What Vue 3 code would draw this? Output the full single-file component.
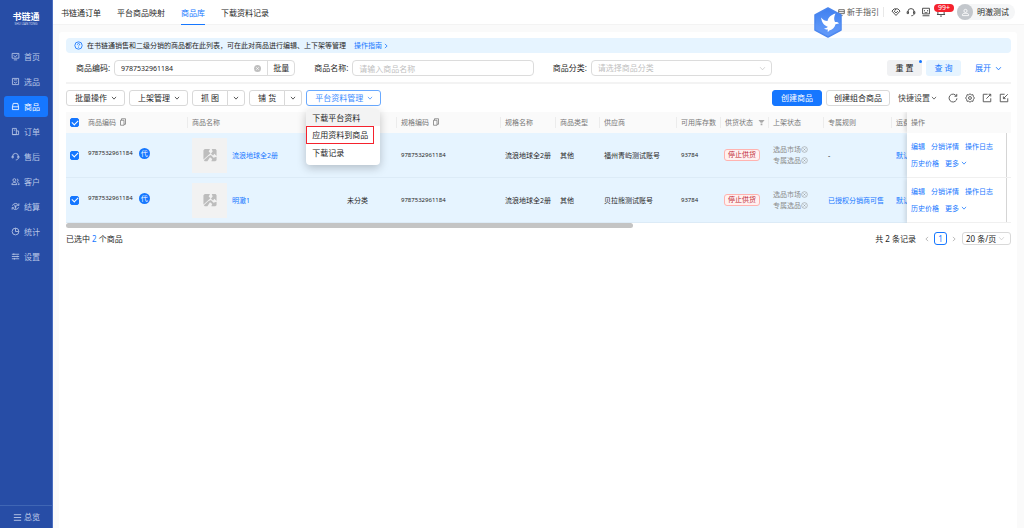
<script setup>
import { ref } from 'vue'

const icons = {
  home: 'M2 2.5h12v8.5H2zM5 14h6M4.5 6l3 2.5L11.5 5',
  pick: 'M2.5 2.5h11v11h-11zM5 5.2h6M5 8.5l2.5 2.5L11 8.5',
  goods: 'M4 2.5h8l1.5 6v5h-11v-5zM2.5 8.5h11',
  order: 'M2.5 13.5v-11h7v11zM9.5 7h4v6.5h-11M5 5.5h2.5',
  headset: 'M3 9V7.5a5 5 0 0 1 10 0V9M3 7.5H1.8v3H4v-3zM13 7.5h1.2v3H12v-3zM13 11c-.5 2-2 3-4.5 3',
  users: 'M6 8.2a2.6 2.6 0 1 0 0-5.2 2.6 2.6 0 0 0 0 5.2zM1.5 13.5c0-5 9-5 9 0zM10.5 3.5c3 0 3 4.5 0 4.7M11.5 9.5c2 .5 3 2 3 4h-2',
  settle: 'M13.5 6A6 6 0 0 0 2.5 6.5M2.5 10a6 6 0 0 0 11-.5M14 2.5V6h-3M2 13.5V10h3M6 5l2 3 2-3M8 8v4M6 8.5h4',
  stats: 'M8 2a6 6 0 1 0 6 6M8 2v6h6a6 6 0 0 0-6-6',
  sliders: 'M1.5 4h13M1.5 8h13M1.5 12h13M5 2.5v3M11 6.5v3M6 10.5v3',
  menu: 'M1.5 3h13M1.5 8h13M1.5 13h13',
  down: 'M2.5 5l5.5 6 5.5-6',
  left: 'M11 2.5L5 8l6 5.5',
  right: 'M5 2.5L11 8l-6 5.5',
  copy: 'M5 1.5h8v11h-3M5 1.5v3M3 4.5h7v10H3z',
  help: 'M8 1.5a6.5 6.5 0 1 0 0 13 6.5 6.5 0 0 0 0-13M6 6.5c0-3 4-2.5 4-.3C10 8 8 7.5 8 9.5M8 11v1.2',
  cross: 'M8 1.5a6.5 6.5 0 1 0 0 13 6.5 6.5 0 0 0 0-13M5.5 5.5l5 5M10.5 5.5l-5 5',
  guide: 'M3 3h10v7H3zM3 6.5h10M6 13.5h4',
  tag: 'M1.5 6.5L5 3h6l3.5 3.5L8 13.5zM5 6.5l3 3 3-3M8 3L6 6',
  feedback: 'M2.5 2h11v9h-11zM2.5 14h11M5.5 5v1.5M10.5 5v1.5M5.5 8c1.5 1.5 3.5 1.5 5 0',
  bell: 'M3 12V7a5 5 0 0 1 10 0v5M1.5 12h13M6.5 14.5h3',
  reload: 'M13.5 5A6.3 6.3 0 1 0 14.3 8.5M14 1.5V5.2h-3.7',
  gear: 'M8 1.2l2 1.7 2.7-.2.6 2.6L15 8l-1.7 2.7-.6 2.6-2.7-.2-2 1.7-2-1.7-2.7.2-.6-2.6L1 8l1.7-2.7.6-2.6 2.7.2zM8 5.7a2.3 2.3 0 1 0 0 4.6 2.3 2.3 0 0 0 0-4.6',
  exportBox: 'M9 2H2v12h12V8.5M7 9l7-7M10.5 2H14v3.5',
  importBox: 'M9 2H2v12h12V8.5M14 2L7 9M7 5.5V9h3.5'
}

const tabs = ['书链通订单', '平台商品映射', '商品库', '下载资料记录']
const nav = [
  ['home', '首页'], ['pick', '选品'], ['goods', '商品'], ['order', '订单'], ['headset', '售后'],
  ['users', '客户'], ['settle', '结算'], ['stats', '统计'], ['sliders', '设置']
]
const code = ref('9787532961184')
const name = ref('')
const category = ref('')
const pageSize = ref('20')
const rows = ref([
  { id: 1, checked: true, code: '9787532961184', name: '流浪地球全2册', cat: '', spec: '流浪地球全2册', supplier: '福州青屿测试账号', stock: 93784, rule: '' },
  { id: 2, checked: true, code: '9787532961184', name: '明澈1', cat: '未分类', spec: '流浪地球全2册', supplier: '贝拉熊测试账号', stock: 93784, rule: '已授权分销商可售' }
])
const all = ref(true)
</script>

<template>
  <div class="app">
    <aside class="side">
      <div class="brand">
        <strong>书链通</strong>
        <small>SHU LIAN TONG</small>
      </div>
      <nav class="menu">
        <a v-for="[icon, label] in nav" :key="label" href="#" :class="{ on: label === '商品' }">
          <svg class="ic" viewBox="0 0 16 16"><path :d="icons[icon]" /></svg>{{ label }}
        </a>
      </nav>
      <a class="overview" href="#"><svg class="ic" viewBox="0 0 16 16"><path :d="icons.menu" /></svg>总览</a>
    </aside>

    <div class="main">
      <header class="top">
        <nav class="tabs">
          <a v-for="t in tabs" :key="t" href="#" :class="{ on: t === '商品库' }">{{ t }}</a>
        </nav>
        <div class="tools">
          <svg class="bird" viewBox="0 0 28 31">
            <defs>
              <linearGradient id="hex" x1="0" y1="0" x2="0" y2="1">
                <stop offset="0" stop-color="#3f7ff0" />
                <stop offset="1" stop-color="#6aa2fb" />
              </linearGradient>
            </defs>
            <path d="M14 1L27 8v15L14 30 1 23V8z" fill="url(#hex)" stroke="#4a86ee" stroke-width="1.5" stroke-linejoin="round" />
            <path d="M14 30L1 23V16l13 7 13-8v8z" fill="#5b93f7" opacity=".5" />
            <path d="M7 10.500c2 2.500 4 3.500 6.500 3.500 1-4 3.500-6 8-7.500-1.500 3-1.800 6-.5 8.500 1.500-.3 3 0 4 1.500l-3.500.8c-.8 3.500-3 5.200-5.500 6-1 .3-1.500 1-2 2-.5-1-.4-1.800 0-2.800-1.500.3-3-.3-4-1.300 1.800 0 3-.5 3.800-1.500-3.500-1-6-4-6.800-9.200z" fill="#fff" />
          </svg>
          <a class="guide" href="#"><svg class="ic" viewBox="0 0 16 16"><path :d="icons.guide" /></svg>新手指引</a>
          <div class="top-icons">
            <button type="button" aria-label="优惠"><svg class="ic" viewBox="0 0 16 16"><path :d="icons.tag" /></svg></button>
            <button type="button" aria-label="客服"><svg class="ic" viewBox="0 0 16 16"><path :d="icons.headset" /></svg></button>
            <button type="button" aria-label="反馈"><svg class="ic" viewBox="0 0 16 16"><path :d="icons.feedback" /></svg></button>
            <button type="button" aria-label="消息"><svg class="ic" viewBox="0 0 16 16"><path :d="icons.bell" /></svg><span class="count">99+</span></button>
          </div>
          <button type="button" class="user">
            <span class="avatar"><svg class="ic" viewBox="0 0 16 16"><path d="M8 8a2.800 2.800 0 1 0 0-5.600A2.800 2.800 0 0 0 8 8zM2.500 13.500V12c0-2 2-2.500 5.500-2.500s5.500.5 5.500 2.500v1.500z" /></svg></span>明澈测试
          </button>
        </div>
      </header>

      <main class="card">
        <p class="tip">
          <svg class="ic" viewBox="0 0 16 16"><path :d="icons.help" /></svg>
          <span>在书链通销售和二级分销的商品都在此列表，可在此对商品进行编辑、上下架等管理</span>
          <a href="#">操作指南<svg class="ic s6" viewBox="0 0 16 16"><path :d="icons.right" /></svg></a>
        </p>

        <form class="filter" @submit.prevent>
          <div class="field">
            <label for="code">商品编码:</label>
            <div class="joined">
              <input id="code" v-model="code" class="num" type="text">
              <button type="button" class="clear" aria-label="清除"><svg viewBox="0 0 16 16"><circle cx="8" cy="8" r="8" fill="#bfbfbf" /><path d="M5 5l6 6M11 5l-6 6" stroke="#fff" stroke-width="1.6" /></svg></button>
              <button type="button" class="batch">批量</button>
            </div>
          </div>
          <div class="field">
            <label for="name">商品名称:</label>
            <div class="joined"><input id="name" v-model="name" type="text" placeholder="请输入商品名称"></div>
          </div>
          <div class="field">
            <label for="cat">商品分类:</label>
            <div class="joined">
              <select id="cat" v-model="category" class="empty"><option value="">请选择商品分类</option></select>
              <svg class="ic caret" viewBox="0 0 16 16"><path :d="icons.down" /></svg>
            </div>
          </div>
          <div class="actions">
            <button type="reset" class="btn grey">重 置<i class="dot"></i></button>
            <button type="submit" class="btn soft">查 询</button>
            <button type="button" class="expand">展开<svg class="ic" viewBox="0 0 16 16"><path :d="icons.down" /></svg></button>
          </div>
        </form>

        <div class="bar">
          <button type="button" class="btn more">批量操作<svg class="ic s6" viewBox="0 0 16 16"><path :d="icons.down" /></svg></button>
          <button type="button" class="btn more">上架管理<svg class="ic s6" viewBox="0 0 16 16"><path :d="icons.down" /></svg></button>
          <div class="split">
            <button type="button" class="btn">抓 图</button>
            <button type="button" class="btn" aria-label="更多抓图"><svg class="ic s6" viewBox="0 0 16 16"><path :d="icons.down" /></svg></button>
          </div>
          <div class="split">
            <button type="button" class="btn">铺 货</button>
            <button type="button" class="btn" aria-label="更多铺货"><svg class="ic s6" viewBox="0 0 16 16"><path :d="icons.down" /></svg></button>
          </div>
          <div class="drop">
            <button type="button" class="btn more open">平台资料管理<svg class="ic s6" viewBox="0 0 16 16"><path :d="icons.down" /></svg></button>
            <div class="pop">
              <button type="button" class="hover">下载平台资料</button>
              <button type="button" class="marked">应用资料到商品</button>
              <button type="button">下载记录</button>
            </div>
          </div>
          <span class="grow"></span>
          <button type="button" class="btn primary">创建商品</button>
          <button type="button" class="btn slim">创建组合商品</button>
          <button type="button" class="quick">快捷设置<svg class="ic s6" viewBox="0 0 16 16"><path :d="icons.down" /></svg></button>
          <div class="bar-icons">
            <button type="button" aria-label="刷新"><svg class="ic" viewBox="0 0 16 16"><path :d="icons.reload" /></svg></button>
            <button type="button" aria-label="设置"><svg class="ic" viewBox="0 0 16 16"><path :d="icons.gear" /></svg></button>
            <button type="button" aria-label="导出"><svg class="ic" viewBox="0 0 16 16"><path :d="icons.exportBox" /></svg></button>
            <button type="button" aria-label="导入"><svg class="ic" viewBox="0 0 16 16"><path :d="icons.importBox" /></svg></button>
          </div>
        </div>

        <table class="grid">
          <colgroup>
            <col class="w18"><col class="w104"><col class="w155"><col class="w54"><col class="w104"><col class="w55"><col class="w44">
            <col class="w77"><col class="w44"><col class="w48"><col class="w55"><col class="w68"><col class="w15"><col class="w104">
          </colgroup>
          <thead>
            <tr>
              <th class="pick"><input v-model="all" type="checkbox" aria-label="全选"></th>
              <th class="line">商品编码<svg class="ic" viewBox="0 0 16 16"><path :d="icons.copy" /></svg></th>
              <th>商品名称</th>
              <th class="line"></th>
              <th class="line">规格编码<svg class="ic" viewBox="0 0 16 16"><path :d="icons.copy" /></svg></th>
              <th class="line">规格名称</th>
              <th class="line">商品类型</th>
              <th class="line">供应商</th>
              <th class="line">可用库存数</th>
              <th class="line">供货状态<svg class="funnel" viewBox="0 0 16 16"><path d="M1 2h14L10 8.5H6zM6 10h4v4H6z" fill="#aaa" /></svg></th>
              <th class="line">上架状态</th>
              <th class="line">专属规则</th>
              <th class="cut">运费</th>
              <th class="fixed">操作</th>
            </tr>
          </thead>
          <tbody>
            <tr v-for="r in rows" :key="r.id">
              <td class="pick"><input v-model="r.checked" type="checkbox" :aria-label="'选择' + r.name"></td>
              <td><div class="code"><span class="num">{{ r.code }}</span><span class="agent">代</span></div></td>
              <td>
                <div class="prod">
                  <span class="thumb"><svg viewBox="0 0 16 16"><path d="M2 1h6L6.5 4l2 2L5 9l-4.5 4V2.5zM10 1h4.5L15.5 2.5V9L13 6.5l-1.5 2L9 6.5 11 4zM6 9.5L9 8l3 3 3.5-1v4l-1.5 1H9.5l1-2.5L8 10.5 5 15H2l-1-1z" fill="#bdbdbd" /></svg></span>
                  <a href="#">{{ r.name }}</a>
                </div>
              </td>
              <td>{{ r.cat }}</td>
              <td class="num">{{ r.code }}</td>
              <td>{{ r.spec }}</td>
              <td>其他</td>
              <td>{{ r.supplier }}</td>
              <td class="num">{{ r.stock }}</td>
              <td><span class="tag">停止供货</span></td>
              <td class="shelf">
                <div>选品市场<svg class="ic" viewBox="0 0 16 16"><path :d="icons.cross" /></svg></div>
                <div>专属选品<svg class="ic" viewBox="0 0 16 16"><path :d="icons.cross" /></svg></div>
              </td>
              <td><a v-if="r.rule" href="#">{{ r.rule }}</a><template v-else>-</template></td>
              <td class="cut"><a href="#">默认</a></td>
              <td class="fixed">
                <div class="ops">
                  <a href="#">编辑</a><a href="#">分销详情</a><a href="#">操作日志</a>
                  <a href="#">历史价格</a><a href="#">更多<svg class="ic s6" viewBox="0 0 16 16"><path :d="icons.down" /></svg></a>
                </div>
              </td>
            </tr>
          </tbody>
        </table>
        <div class="scroll"><span></span></div>

        <footer class="foot">
          <span>已选中 <b>2</b> 个商品</span>
          <span class="grow"></span>
          <span>共 2 条记录</span>
          <div class="pager">
            <button type="button" aria-label="上一页"><svg class="ic s6" viewBox="0 0 16 16"><path :d="icons.left" /></svg></button>
            <button type="button" class="cur">1</button>
            <button type="button" aria-label="下一页"><svg class="ic s6" viewBox="0 0 16 16"><path :d="icons.right" /></svg></button>
          </div>
          <div class="size">
            <select v-model="pageSize" aria-label="每页条数"><option value="20">20 条/页</option></select>
            <svg class="ic caret" viewBox="0 0 16 16"><path :d="icons.down" /></svg>
          </div>
        </footer>
      </main>
    </div>
  </div>
</template>

<style>
body { background: #fafafa; }
</style>

<style scoped>
.app, .app * { box-sizing: border-box; }
.app {
  display: flex;
  min-height: 100vh;
  font: 8px/12px "Noto Sans", "Noto Sans CJK SC", sans-serif;
  color: #262626;
}
a { color: #1677ff; text-decoration: none; }
button, input, select { font: inherit; color: inherit; margin: 0; padding: 0; border: 0; background: none; outline: 0; }
button { white-space: nowrap; cursor: pointer; }
.ic { width: 9px; height: 9px; flex: none; fill: none; stroke: currentColor; stroke-width: 1.5; }
.ic.s6 { width: 6px; height: 6px; stroke-width: 2; }
.grow { flex: 1; }

.side { flex: 0 0 53px; display: flex; flex-direction: column; background: #274da6; border-right: 1px solid #4b6fc0; color: #b9c7e6; }
.brand { display: flex; flex-direction: column; align-items: center; padding: 12px 0 0; height: 46px; color: #fff; }
.brand strong { font-size: 9px; line-height: 10px; }
.brand small { font-size: 3px; line-height: 4px; color: #d5def2; }
.menu { display: grid; gap: 4px; padding: 0 4px; }
.menu a { display: flex; align-items: center; gap: 4px; height: 21px; padding-left: 7px; border-radius: 3px; color: #b9c7e6; }
.menu a.on { background: #1677ff; color: #fff; }
.overview { display: flex; align-items: center; gap: 2px; height: 23px; margin-top: auto; padding-left: 13px; border-top: 1px solid #4066b4; color: #c6d2ec; }

.main { flex: 1; min-width: 0; display: flex; flex-direction: column; }
.top { display: flex; justify-content: space-between; height: 25px; padding: 0 9px 0 8px; background: #fff; border-bottom: 1px solid #f3f3f3; }
.tabs { display: flex; gap: 16px; }
.tabs a { color: #262626; line-height: 25px; height: 25px; }
.tabs a.on { color: #1677ff; border-bottom: 1px solid #1677ff; }
.tools { position: relative; display: flex; align-items: center; color: #444; }
.guide { display: flex; align-items: center; gap: 1px; padding-right: 4px; color: #555; border-right: 1px solid #e8e8e8; line-height: 10px; }
.bird { position: absolute; left: -23px; top: 7px; width: 28px; height: 31px; z-index: 3; }
.top-icons { display: flex; gap: 5px; padding: 0 11px 0 7px; }
.top-icons button { display: flex; position: relative; }
.top-icons .ic, .bar-icons .ic { width: 10px; height: 10px; }
.count { position: absolute; left: -2px; top: -3px; padding: 0 4px; border-radius: 4px; background: #f5222d; color: #fff; font-size: 7px; line-height: 8px; }
.user { display: flex; align-items: center; gap: 4px; padding-right: 6px; border-radius: 8px; background: #f5f6f7; color: #262626; }
.avatar { display: grid; place-items: center; width: 16px; height: 16px; border-radius: 8px; background: #c3c7cc; color: #fff; }

.card { flex: 1; margin: 7px 7px 0 6px; padding: 6px 6px 0 7px; background: #fff; border-radius: 3px 3px 0 0; }
.tip { display: flex; align-items: center; gap: 4px; margin: 0; padding: 0 8px; height: 15px; border-radius: 4px; background: #e6f4ff; font-size: 7px; }
.tip .ic { color: #1677ff; }
.tip a { display: flex; align-items: center; gap: 1px; margin-left: 4px; }

.filter { display: flex; align-items: center; gap: 19px; padding: 7px 0 6px 10px; border-bottom: 2px solid #f3f3f3; }
.field { flex: 1; display: flex; align-items: center; min-width: 0; }
.field label { flex: 0 0 38px; }
.joined { position: relative; flex: 1; display: flex; align-items: center; height: 16px; min-width: 0; border: 1px solid #dcdcdc; border-radius: 4px; }
.joined input, .joined select { flex: 1; min-width: 0; height: 14px; padding: 0 6px; }
.joined input.num { font-size: 7px; }
.joined input::placeholder { color: #bfbfbf; opacity: 1; }
select { appearance: none; }
.joined select.empty { color: #bfbfbf; }
.caret { position: absolute; right: 5px; width: 7px; height: 7px; color: #bfbfbf; pointer-events: none; }
.clear { display: flex; padding-right: 6px; }
.clear svg { width: 7px; height: 7px; }
.batch { height: 14px; padding: 0 5px; border-left: 1px solid #dcdcdc; }
.actions { flex: 0 0 220px; display: flex; justify-content: flex-end; align-items: center; gap: 4px; }
.btn { display: inline-flex; align-items: center; justify-content: center; gap: 4px; height: 16px; padding: 0 8px; border: 1px solid #d9d9d9; border-radius: 3px; background: #fff; }
.btn.more { padding-right: 7px; }
.btn.slim { padding: 0 7px; }
.btn.grey, .btn.soft { position: relative; width: 35px; padding: 0; border-color: transparent; }
.btn.grey { background: #f0f1f3; }
.btn.soft { background: #e6f4ff; color: #1677ff; }
.dot { position: absolute; right: -1px; top: -1px; width: 3px; height: 3px; border-radius: 2px; background: #1677ff; }
.expand { display: flex; align-items: center; gap: 4px; margin-left: 10px; margin-right: 9px; color: #1677ff; }
.expand .ic { width: 7px; height: 7px; stroke-width: 2; }

.bar { display: flex; align-items: center; gap: 4px; padding: 6px 0; }
.split { display: flex; }
.split .btn:first-child { border-radius: 3px 0 0 3px; }
.split .btn:last-child { margin-left: -1px; padding: 0 5px; border-radius: 0 3px 3px 0; }
.drop { position: relative; }
.btn.open { border-color: #69a9ff; color: #3c8cff; }
.btn.primary { background: #1677ff; border-color: #1677ff; color: #fff; }
.quick { display: flex; align-items: center; gap: 1px; margin-left: 4px; color: #444; }
.bar-icons { display: flex; gap: 7px; padding: 0 2px 0 7px; color: #555; }
.bar-icons button { display: flex; }
.pop { position: absolute; left: 0; top: 19px; z-index: 2; display: grid; width: 74px; padding-bottom: 4px; border-radius: 4px; background: #fff; box-shadow: 0 3px 10px rgba(0, 0, 0, .22); }
.pop button { height: 17px; padding: 0 6px; text-align: left; }
.pop .hover { background: #f3f3f3; border-radius: 4px 4px 0 0; }
.pop .marked { width: 68px; height: 18px; border: 1px solid #f5222d; padding: 0 5px; }

.grid { width: 100%; table-layout: fixed; border-collapse: separate; border-spacing: 0; font-size: 7px; line-height: 11px; }
.w15 { width: 15px; } .w18 { width: 18px; } .w44 { width: 44px; } .w48 { width: 48px; } .w54 { width: 54px; } .w55 { width: 55px; }
.w68 { width: 68px; } .w77 { width: 77px; } .w104 { width: 104px; } .w155 { width: 155px; }
th, td { padding: 0 4px; text-align: left; white-space: nowrap; }
th { height: 21px; background: #fafafa; color: #777; font-weight: 400; }
th.line { background: linear-gradient(#ececec, #ececec) right center / 1px 11px no-repeat #fafafa; }
th .ic { width: 8px; height: 8px; margin-left: 3px; vertical-align: -1px; }
.funnel { width: 7px; height: 7px; margin-left: 5px; vertical-align: -1px; }
td { height: 45px; background: #e6f4ff; border-bottom: 1px solid #dcebf7; }
th.cut, td.cut { overflow: hidden; padding-right: 0; text-overflow: clip; }
th.fixed { box-shadow: -2px 0 4px rgba(0, 0, 0, .12); clip-path: inset(0 0 0 -6px); }
td.fixed { background: linear-gradient(#d5d5d5, #d5d5d5) right 4px top / 1px 100% no-repeat #fff; box-shadow: -2px 0 4px rgba(0, 0, 0, .12); clip-path: inset(0 0 0 -6px); border-bottom-color: #f0f0f0; }
input[type="checkbox"] { appearance: none; display: grid; place-items: center; width: 9px; height: 9px; border: 1px solid #d9d9d9; border-radius: 2px; background: #fff; }
input[type="checkbox"]:checked { background: #1677ff; border-color: #1677ff; }
input[type="checkbox"]:checked::after { content: ""; width: 5px; height: 3px; border: solid #fff; border-width: 0 0 1px 1px; transform: translateY(-1px) rotate(-45deg); }
td.num, .code .num { font-size: 6px; }
.code { display: flex; align-items: center; gap: 6px; padding-bottom: 4px; }
.agent { width: 11px; height: 11px; border-radius: 6px; background: #1677ff; color: #fff; text-align: center; }
.prod { display: flex; align-items: center; gap: 5px; }
.thumb { display: grid; place-items: center; width: 35px; height: 35px; background: #f2f2f2; }
.thumb svg { width: 16px; height: 14px; }
.tag { display: inline-block; margin-left: -1px; padding: 0 3px; border: 1px solid #ffb3b0; border-radius: 3px; background: #fff1f0; color: #c01f32; line-height: 10px; }
.shelf { color: #8c8c8c; }
.shelf .ic { width: 7px; height: 7px; vertical-align: -1px; stroke-width: 1.2; }
.ops { display: flex; flex-wrap: wrap; gap: 6px; }
.ops .ic { margin-left: 2px; }
.scroll { height: 5px; }
.scroll span { display: block; width: 60%; height: 5px; border-radius: 3px; background: #c4c4c4; }

.foot { display: flex; align-items: center; padding-top: 4px; }
.foot b { color: #1677ff; font-weight: 400; }
.pager { display: flex; align-items: center; gap: 4px; padding: 0 5px 0 8px; color: #aaa; }
.pager button { display: flex; justify-content: center; }
.pager .cur { width: 13px; height: 13px; line-height: 11px; border: 1px solid #1677ff; border-radius: 3px; color: #1677ff; }
.size { position: relative; display: flex; align-items: center; height: 13px; border: 1px solid #d9d9d9; border-radius: 3px; }
.size select { width: 47px; height: 11px; padding: 0 0 0 3px; line-height: 11px; }
</style>
